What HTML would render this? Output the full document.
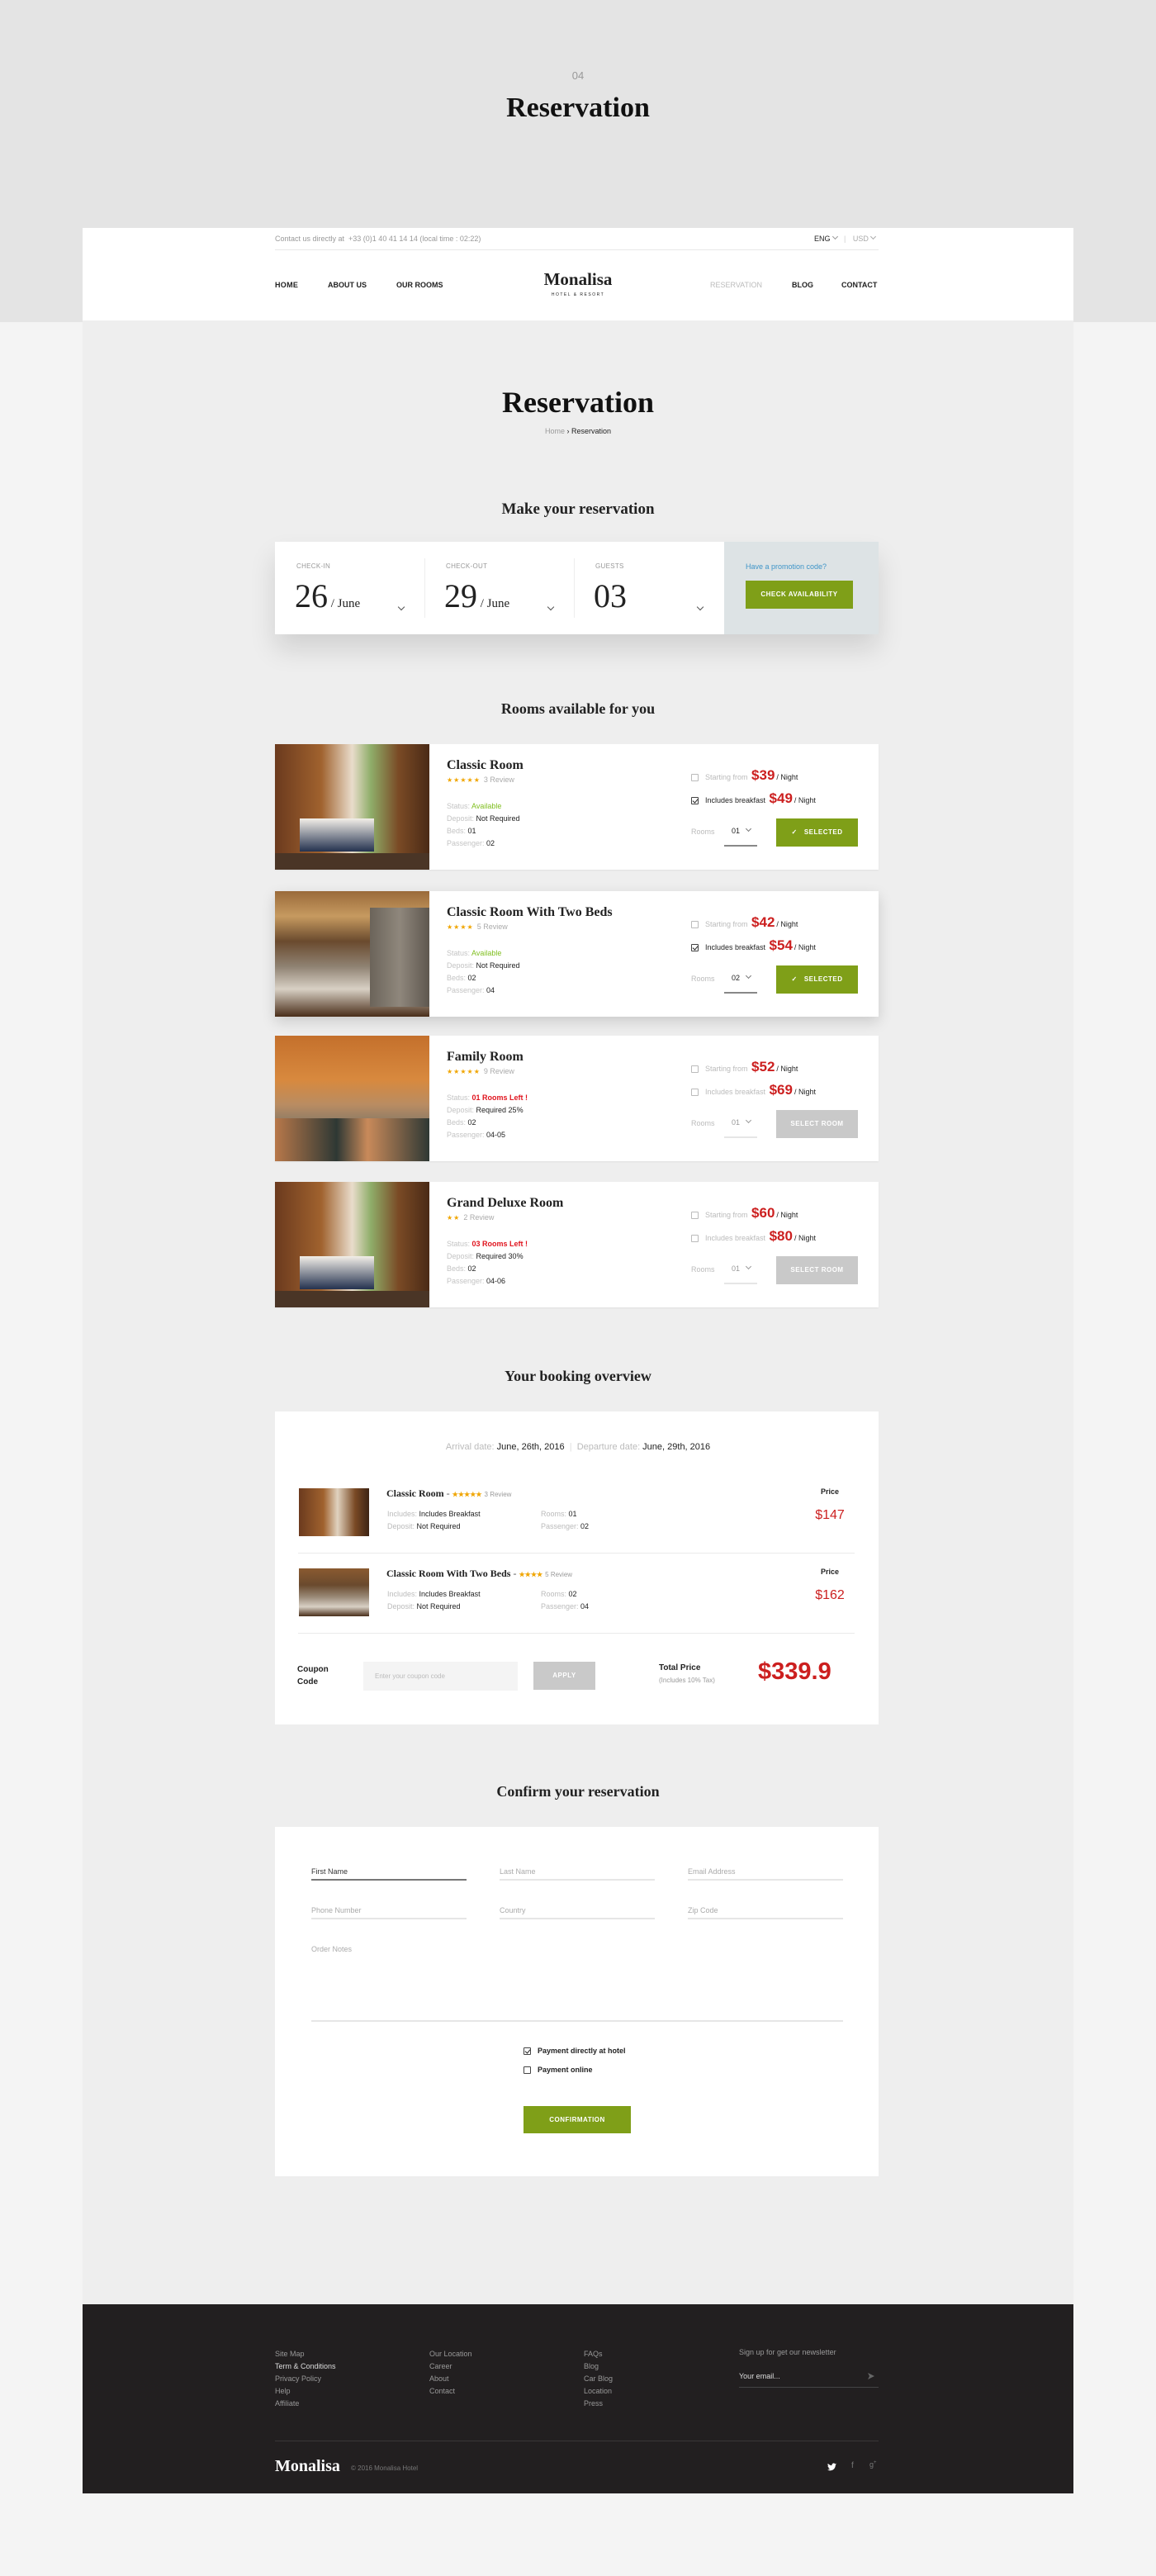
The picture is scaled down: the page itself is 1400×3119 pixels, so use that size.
<!DOCTYPE html>
<html><head><meta charset="utf-8">
<style>
*{margin:0;padding:0;box-sizing:border-box}
body{width:1400px;height:3119px;background:#f4f4f4;font-family:"Liberation Sans",sans-serif;position:relative;overflow:hidden;color:#222}
.a{position:absolute}
.serif{font-family:"Liberation Serif",serif;font-weight:bold}
.t{white-space:nowrap}
.g{color:#bbb}
.chev{display:inline-block;width:5px;height:5px;border:solid currentColor;border-width:0 1px 1px 0;transform:rotate(45deg);vertical-align:3px;margin-left:3px}
.card{position:absolute;left:333px;width:731px;height:152px;background:#fff;box-shadow:0 1px 2px rgba(0,0,0,.06)}
.card .img{position:absolute;left:0;top:0;width:187px;height:152px;overflow:hidden}
.card .tt{position:absolute;left:208px;top:17px;font-size:16px}
.card .st{position:absolute;left:208px;top:38px;font-size:8px;color:#f0a500;letter-spacing:1px}
.card .st span{color:#aaa;letter-spacing:0;margin-left:4px;font-size:9px}
.card .inf{position:absolute;left:208px;font-size:9px;color:#222}
.card .inf b{font-weight:normal;color:#c4c4c4}
.cb{display:inline-block;width:9px;height:9px;border:1px solid #bbb;border-radius:1px;vertical-align:middle;margin-right:8px}
.cbk{border-color:#444;position:relative}
.cbk:after{content:"";position:absolute;left:2px;top:0px;width:3px;height:5px;border:solid #222;border-width:0 1.5px 1.5px 0;transform:rotate(40deg)}
.card .pr{position:absolute;left:504px;font-size:9px}
.pr i{font-style:normal;color:#cc1f1f;font-size:17px;font-weight:bold;margin:0 2px 0 2px}
.btn{position:absolute;color:#fff;font-size:8px;font-weight:bold;letter-spacing:.5px;text-align:center}
.green{background:#7f9f18}
.grey{background:#c9c9c9}
.fl{position:absolute;font-size:9px;color:#aaa;border-bottom:2px solid #e6e6e6;height:16px;width:188px}
.ft{position:absolute;font-size:9px;color:#999}
</style></head><body>
<div class="a" style="left:0;top:0;width:1400px;height:390px;background:#e4e4e4"></div>
<div class="a t" style="left:0;width:1400px;top:84px;text-align:center;font-size:13px;color:#999">04</div>
<div class="a t serif" style="left:0;width:1400px;top:112px;text-align:center;font-size:34px;color:#111">Reservation</div>

<div class="a" style="left:100px;top:276px;width:1200px;height:2744px;background:#eeeeee"></div>
<div class="a" style="left:100px;top:276px;width:1200px;height:112px;background:#fff"></div>
<div class="a t" style="left:333px;top:284px;font-size:9px;color:#999">Contact us directly at &nbsp;+33 (0)1 40 41 14 14 (local time : 02:22)</div>
<div class="a t" style="left:986px;top:284px;font-size:9px;color:#222">ENG<span class="chev" style="color:#999"></span> <span style="color:#ccc;margin:0 6px">|</span> <span style="color:#aaa">USD<span class="chev"></span></span></div>
<div class="a" style="left:333px;top:302px;width:731px;height:1px;background:#e8e8e8"></div>
<div class="a t" style="left:333px;top:340px;font-size:9px;font-weight:bold;letter-spacing:.3px">HOME</div>
<div class="a t" style="left:397px;top:340px;font-size:9px;font-weight:bold">ABOUT US</div>
<div class="a t" style="left:480px;top:340px;font-size:9px;font-weight:bold">OUR ROOMS</div>
<div class="a t" style="left:860px;top:340px;font-size:9px;color:#bbb">RESERVATION</div>
<div class="a t" style="left:959px;top:340px;font-size:9px;font-weight:bold">BLOG</div>
<div class="a t" style="left:1019px;top:340px;font-size:9px;font-weight:bold">CONTACT</div>
<div class="a t serif" style="left:600px;width:200px;top:326px;text-align:center;font-size:21px">Monalisa</div>
<div class="a t" style="left:600px;width:200px;top:354px;text-align:center;font-size:5px;letter-spacing:1.5px">HOTEL &amp; RESORT</div>

<div class="a t serif" style="left:0;width:1400px;top:466px;text-align:center;font-size:36px;color:#111">Reservation</div>
<div class="a t" style="left:0;width:1400px;top:517px;text-align:center;font-size:9px"><span style="color:#999">Home</span> › Reservation</div>

<div class="a t serif" style="left:0;width:1400px;top:606px;text-align:center;font-size:19px">Make your reservation</div>
<div class="a" style="left:333px;top:656px;width:731px;height:112px;background:#fff;box-shadow:0 18px 30px rgba(0,0,0,.12)"></div>
<div class="a" style="left:877px;top:656px;width:187px;height:112px;background:#dde3e5"></div>
<div class="a" style="left:514px;top:676px;width:1px;height:72px;background:#eee"></div>
<div class="a" style="left:695px;top:676px;width:1px;height:72px;background:#eee"></div>
<div class="a t" style="left:359px;top:681px;font-size:8px;color:#999;letter-spacing:.3px">CHECK-IN</div>
<div class="a t" style="left:540px;top:681px;font-size:8px;color:#999;letter-spacing:.3px">CHECK-OUT</div>
<div class="a t" style="left:721px;top:681px;font-size:8px;color:#999;letter-spacing:.3px">GUESTS</div>
<div class="a t" style="left:357px;top:698px;font-family:'Liberation Serif',serif;font-size:40px">26<span style="font-size:15px"> / June</span></div>
<div class="a t" style="left:538px;top:698px;font-family:'Liberation Serif',serif;font-size:40px">29<span style="font-size:15px"> / June</span></div>
<div class="a t" style="left:719px;top:698px;font-family:'Liberation Serif',serif;font-size:40px">03</div>
<div class="a" style="left:480px;top:728px;color:#555"><span class="chev" style="width:6px;height:6px"></span></div>
<div class="a" style="left:661px;top:728px;color:#555"><span class="chev" style="width:6px;height:6px"></span></div>
<div class="a" style="left:842px;top:728px;color:#555"><span class="chev" style="width:6px;height:6px"></span></div>
<div class="a t" style="left:903px;top:681px;font-size:9px;color:#3f95c8">Have a promotion code?</div>
<div class="btn green" style="left:903px;top:703px;width:130px;height:34px;line-height:34px">CHECK AVAILABILITY</div>

<div class="a t serif" style="left:0;width:1400px;top:848px;text-align:center;font-size:18px">Rooms available for you</div>

<div class="card" style="top:901px">
<div class="img" style="background:linear-gradient(90deg,#6b3a1e 0%,#a0622e 30%,#e9dccb 50%,#8fae6a 62%,#7a4a25 80%,#4a2a16 100%)"><div style="position:absolute;left:30px;top:90px;width:90px;height:40px;background:linear-gradient(#f3efe8,#24324f);"></div><div style="position:absolute;left:0;bottom:0;width:187px;height:20px;background:#4a3526"></div></div>
<div class="tt serif t">Classic Room</div>
<div class="st t">★★★★★<span>3 Review</span></div>
<div class="inf t" style="top:70px"><b>Status:</b> <span style="color:#7fbf1e">Available</span></div>
<div class="inf t" style="top:85px"><b>Deposit:</b> Not Required</div>
<div class="inf t" style="top:100px"><b>Beds:</b> 01</div>
<div class="inf t" style="top:115px"><b>Passenger:</b> 02</div>
<div class="pr t" style="top:28px"><span class="cb"></span><span class="g">Starting from</span> <i>$39</i>/ Night</div>
<div class="pr t" style="top:56px"><span class="cb cbk"></span>Includes breakfast <i>$49</i>/ Night</div>
<div class="pr t g" style="top:101px">Rooms</div>
<div class="a t" style="left:553px;top:100px;font-size:9px">01 &nbsp;<span class="chev" style="color:#777"></span></div>
<div class="a" style="left:544px;top:122px;width:40px;height:2px;background:#888"></div>
<div class="btn green" style="left:607px;top:90px;width:99px;height:34px;line-height:34px">✓ &nbsp; SELECTED</div>
</div>
<div class="card" style="top:1079px;box-shadow:0 6px 16px rgba(0,0,0,.15)">
<div class="img" style="background:linear-gradient(180deg,#9a6a3a 0%,#c69a60 20%,#6a4a2e 40%,#8f8272 60%,#d8d0c4 78%,#4a2e1a 100%)"><div style="position:absolute;left:115px;top:20px;width:72px;height:120px;background:linear-gradient(90deg,#6b645a,#8f877c,#5e574f)"></div></div>
<div class="tt serif t">Classic Room With Two Beds</div>
<div class="st t">★★★★<span>5 Review</span></div>
<div class="inf t" style="top:70px"><b>Status:</b> <span style="color:#7fbf1e">Available</span></div>
<div class="inf t" style="top:85px"><b>Deposit:</b> Not Required</div>
<div class="inf t" style="top:100px"><b>Beds:</b> 02</div>
<div class="inf t" style="top:115px"><b>Passenger:</b> 04</div>
<div class="pr t" style="top:28px"><span class="cb"></span><span class="g">Starting from</span> <i>$42</i>/ Night</div>
<div class="pr t" style="top:56px"><span class="cb cbk"></span>Includes breakfast <i>$54</i>/ Night</div>
<div class="pr t g" style="top:101px">Rooms</div>
<div class="a t" style="left:553px;top:100px;font-size:9px">02 &nbsp;<span class="chev" style="color:#777"></span></div>
<div class="a" style="left:544px;top:122px;width:40px;height:2px;background:#888"></div>
<div class="btn green" style="left:607px;top:90px;width:99px;height:34px;line-height:34px">✓ &nbsp; SELECTED</div>
</div>
<div class="card" style="top:1254px">
<div class="img" style="background:linear-gradient(180deg,#c4702c 0%,#d8893e 35%,#b98c62 55%,#8a7a66 70%,#2f3a34 100%)"><div style="position:absolute;left:0;top:100px;width:187px;height:52px;background:linear-gradient(90deg,#b8784a,#2e3834 40%,#c98a5a 60%,#2e3834)"></div></div>
<div class="tt serif t">Family Room</div>
<div class="st t">★★★★★<span>9 Review</span></div>
<div class="inf t" style="top:70px"><b>Status:</b> <span style="color:#e0141e;font-weight:bold">01 Rooms Left !</span></div>
<div class="inf t" style="top:85px"><b>Deposit:</b> Required 25%</div>
<div class="inf t" style="top:100px"><b>Beds:</b> 02</div>
<div class="inf t" style="top:115px"><b>Passenger:</b> 04-05</div>
<div class="pr t" style="top:28px"><span class="cb"></span><span class="g">Starting from</span> <i>$52</i>/ Night</div>
<div class="pr t" style="top:56px"><span class="cb"></span><span class="g">Includes breakfast</span> <i>$69</i>/ Night</div>
<div class="pr t g" style="top:101px">Rooms</div>
<div class="a t" style="left:553px;top:100px;font-size:9px;color:#999">01 &nbsp;<span class="chev"></span></div>
<div class="a" style="left:544px;top:122px;width:40px;height:2px;background:#e6e6e6"></div>
<div class="btn grey" style="left:607px;top:90px;width:99px;height:34px;line-height:34px">SELECT ROOM</div>
</div>
<div class="card" style="top:1431px">
<div class="img" style="background:linear-gradient(90deg,#6b3a1e 0%,#a0622e 30%,#e9dccb 50%,#8fae6a 62%,#7a4a25 80%,#4a2a16 100%)"><div style="position:absolute;left:30px;top:90px;width:90px;height:40px;background:linear-gradient(#f3efe8,#24324f);"></div><div style="position:absolute;left:0;bottom:0;width:187px;height:20px;background:#4a3526"></div></div>
<div class="tt serif t">Grand Deluxe Room</div>
<div class="st t">★★<span>2 Review</span></div>
<div class="inf t" style="top:70px"><b>Status:</b> <span style="color:#e0141e;font-weight:bold">03 Rooms Left !</span></div>
<div class="inf t" style="top:85px"><b>Deposit:</b> Required 30%</div>
<div class="inf t" style="top:100px"><b>Beds:</b> 02</div>
<div class="inf t" style="top:115px"><b>Passenger:</b> 04-06</div>
<div class="pr t" style="top:28px"><span class="cb"></span><span class="g">Starting from</span> <i>$60</i>/ Night</div>
<div class="pr t" style="top:56px"><span class="cb"></span><span class="g">Includes breakfast</span> <i>$80</i>/ Night</div>
<div class="pr t g" style="top:101px">Rooms</div>
<div class="a t" style="left:553px;top:100px;font-size:9px;color:#999">01 &nbsp;<span class="chev"></span></div>
<div class="a" style="left:544px;top:122px;width:40px;height:2px;background:#e6e6e6"></div>
<div class="btn grey" style="left:607px;top:90px;width:99px;height:34px;line-height:34px">SELECT ROOM</div>
</div>

<div class="a t serif" style="left:0;width:1400px;top:1656px;text-align:center;font-size:18px">Your booking overview</div>
<div class="a" style="left:333px;top:1709px;width:731px;height:379px;background:#fff"></div>
<div class="a t" style="left:0;width:1400px;top:1746px;text-align:center;font-size:11px"><span class="g">Arrival date:</span> June, 26th, 2016 &nbsp;<span style="color:#ddd">|</span>&nbsp; <span class="g">Departure date:</span> June, 29th, 2016</div>

<div class="a" style="left:362px;top:1802px;width:85px;height:58px;background:linear-gradient(90deg,#6b3a1e,#a0622e 35%,#e0d2bf 55%,#7a4a25 80%,#3e2414)"></div>
<div class="a t serif" style="left:468px;top:1801px;font-size:12px">Classic Room <span style="font-weight:normal;color:#555">-</span> <span style="font-family:'Liberation Sans';font-size:8px;color:#f0a500">★★★★★</span> <span style="font-family:'Liberation Sans';font-weight:normal;font-size:8px;color:#999">3 Review</span></div>
<div class="a t" style="left:469px;top:1828px;font-size:9px"><span class="g">Includes:</span> Includes Breakfast</div>
<div class="a t" style="left:469px;top:1843px;font-size:9px"><span class="g">Deposit:</span> Not Required</div>
<div class="a t" style="left:655px;top:1828px;font-size:9px"><span class="g">Rooms:</span> 01</div>
<div class="a t" style="left:655px;top:1843px;font-size:9px"><span class="g">Passenger:</span> 02</div>
<div class="a t" style="left:985px;width:40px;top:1801px;text-align:center;font-size:9px;font-weight:bold">Price</div>
<div class="a t" style="left:975px;width:60px;top:1826px;text-align:center;font-size:16px;color:#cc1f1f">$147</div>
<div class="a" style="left:361px;top:1880px;width:674px;height:1px;background:#eaeaea"></div>

<div class="a" style="left:362px;top:1899px;width:85px;height:58px;background:linear-gradient(180deg,#8a5a30,#6a4a2e 35%,#9a8a78 60%,#d8d0c4 80%,#4a2e1a)"></div>
<div class="a t serif" style="left:468px;top:1898px;font-size:12px">Classic Room With Two Beds <span style="font-weight:normal;color:#555">-</span> <span style="font-family:'Liberation Sans';font-size:8px;color:#f0a500">★★★★</span> <span style="font-family:'Liberation Sans';font-weight:normal;font-size:8px;color:#999">5 Review</span></div>
<div class="a t" style="left:469px;top:1925px;font-size:9px"><span class="g">Includes:</span> Includes Breakfast</div>
<div class="a t" style="left:469px;top:1940px;font-size:9px"><span class="g">Deposit:</span> Not Required</div>
<div class="a t" style="left:655px;top:1925px;font-size:9px"><span class="g">Rooms:</span> 02</div>
<div class="a t" style="left:655px;top:1940px;font-size:9px"><span class="g">Passenger:</span> 04</div>
<div class="a t" style="left:985px;width:40px;top:1898px;text-align:center;font-size:9px;font-weight:bold">Price</div>
<div class="a t" style="left:975px;width:60px;top:1923px;text-align:center;font-size:16px;color:#cc1f1f">$162</div>
<div class="a" style="left:361px;top:1977px;width:674px;height:1px;background:#eaeaea"></div>

<div class="a" style="left:360px;top:2014px;font-size:10px;font-weight:bold;line-height:15px">Coupon<br>Code</div>
<div class="a t" style="left:440px;top:2012px;width:187px;height:35px;background:#f4f4f4;font-size:8px;color:#bbb;line-height:35px;padding-left:14px">Enter your coupon code</div>
<div class="btn grey" style="left:646px;top:2012px;width:75px;height:34px;line-height:34px">APPLY</div>
<div class="a t" style="left:798px;top:2014px;font-size:10px;font-weight:bold">Total Price</div>
<div class="a t" style="left:798px;top:2030px;font-size:8px;color:#999">(Includes 10% Tax)</div>
<div class="a t" style="left:918px;top:2008px;font-size:29px;font-weight:bold;color:#cc1f1f">$339.9</div>

<div class="a t serif" style="left:0;width:1400px;top:2159px;text-align:center;font-size:18px">Confirm your reservation</div>
<div class="a" style="left:333px;top:2212px;width:731px;height:423px;background:#fff"></div>
<div class="fl" style="left:377px;top:2261px;color:#333;border-color:#777">First Name</div>
<div class="fl" style="left:605px;top:2261px">Last Name</div>
<div class="fl" style="left:833px;top:2261px">Email Address</div>
<div class="fl" style="left:377px;top:2308px">Phone Number</div>
<div class="fl" style="left:605px;top:2308px">Country</div>
<div class="fl" style="left:833px;top:2308px">Zip Code</div>
<div class="a t" style="left:377px;top:2355px;font-size:9px;color:#aaa">Order Notes</div>
<div class="a" style="left:377px;top:2446px;width:644px;height:2px;background:#e6e6e6"></div>
<div class="a t" style="left:634px;top:2478px;font-size:9px;font-weight:bold"><span class="cb cbk"></span>Payment directly at hotel</div>
<div class="a t" style="left:634px;top:2501px;font-size:9px;font-weight:bold"><span class="cb" style="border-color:#444"></span>Payment online</div>
<div class="btn green" style="left:634px;top:2550px;width:130px;height:33px;line-height:33px">CONFIRMATION</div>

<div class="a" style="left:100px;top:2790px;width:1200px;height:229px;background:#221f20"></div>
<div class="ft t" style="left:333px;top:2843px;line-height:15px">Site Map<br><span style="color:#ddd">Term &amp; Conditions</span><br>Privacy Policy<br>Help<br>Affiliate</div>
<div class="ft t" style="left:520px;top:2843px;line-height:15px">Our Location<br>Career<br>About<br>Contact</div>
<div class="ft t" style="left:707px;top:2843px;line-height:15px">FAQs<br>Blog<br>Car Blog<br>Location<br>Press</div>
<div class="ft t" style="left:895px;top:2843px">Sign up for get our newsletter</div>
<div class="ft t" style="left:895px;top:2872px;color:#ddd">Your email...</div>
<svg class="a" style="left:1050px;top:2872px" width="10" height="10" viewBox="0 0 10 10"><path d="M1 1 L9 5 L1 9 L3 5 Z" fill="#666"/></svg>
<div class="a" style="left:895px;top:2890px;width:169px;height:1px;background:#444"></div>
<div class="a" style="left:333px;top:2955px;width:731px;height:1px;background:#3a3738"></div>
<div class="a t serif" style="left:333px;top:2975px;font-size:20px;color:#fff">Monalisa</div>
<div class="a t" style="left:425px;top:2984px;font-size:8px;color:#777">© 2016 Monalisa Hotel</div>
<svg class="a" style="left:1002px;top:2982px" width="11" height="10" viewBox="0 0 24 20"><path d="M24 2.4c-.9.4-1.8.6-2.8.8 1-.6 1.8-1.6 2.2-2.7-1 .6-2 1-3.1 1.2A4.9 4.9 0 0 0 11.9 6C7.8 5.8 4.2 3.9 1.7.9c-1.4 2.3-.7 5.2 1.5 6.6-.8 0-1.6-.2-2.2-.6 0 2.4 1.7 4.4 3.9 4.8-.7.2-1.5.2-2.2.1.6 2 2.5 3.4 4.6 3.4A9.9 9.9 0 0 1 0 17.3 14 14 0 0 0 7.5 19.5c9.1 0 14.2-7.7 13.9-14.6 1-.7 1.8-1.5 2.6-2.5z" fill="#fff"/></svg>
<div class="a t" style="left:1031px;top:2980px;font-size:10px;color:#777">f</div>
<div class="a t" style="left:1053px;top:2979px;font-size:9px;color:#777">g<sup style="font-size:6px">+</sup></div>
</body></html>
